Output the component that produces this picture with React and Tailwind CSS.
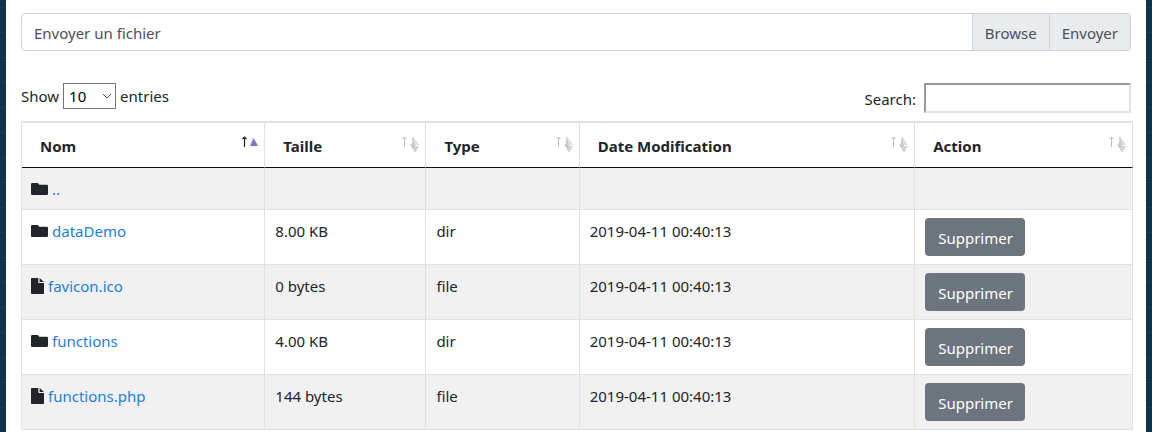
import React, { useState } from "react";

const rows = [
  { name: "..", size: "", type: "", date: "", folder: true, parent: true },
  { name: "dataDemo", size: "8.00 KB", type: "dir", date: "2019-04-11 00:40:13", folder: true },
  { name: "favicon.ico", size: "0 bytes", type: "file", date: "2019-04-11 00:40:13" },
  { name: "functions", size: "4.00 KB", type: "dir", date: "2019-04-11 00:40:13", folder: true },
  { name: "functions.php", size: "144 bytes", type: "file", date: "2019-04-11 00:40:13" },
];

const columns = [
  { label: "Nom", width: "w-[21.9%]", sorted: true },
  { label: "Taille", width: "w-[14.5%]" },
  { label: "Type", width: "w-[13.8%]" },
  { label: "Date Modification", width: "w-[30.2%]" },
  { label: "Action", width: "w-[19.6%]" },
];

function FolderIcon() {
  return (
    <svg className="h-3 w-[17px] shrink-0" viewBox="0 0 17 12" fill="#212529" aria-hidden="true">
      <path d="M1.2 0H6.4Q7.2 0 7.6 .7L8.2 1.7H15.7Q17 1.7 17 3V10.8Q17 12 15.7 12H1.3Q0 12 0 10.8V1.2Q0 0 1.2 0Z" />
    </svg>
  );
}

function FileIcon() {
  return (
    <svg className="h-4 w-[13px] shrink-0" viewBox="0 0 13 16" fill="#212529" aria-hidden="true">
      <path d="M.8 0H7.3V4.2Q7.3 5 8.1 5H13V15.2Q13 16 12.2 16H.8Q0 16 0 15.2V.8Q0 0 .8 0ZM8.6 0L13 4V4.1H8.6Z" />
    </svg>
  );
}

function SortIcon({ sorted }) {
  return sorted ? (
    <svg className="h-5 w-[18px] shrink-0" viewBox="0 0 18 20" aria-hidden="true">
      <path d="M4.5 14V4M2.5 6L4.5 4L6.5 6" fill="none" stroke="#20233f" strokeWidth="1.2" />
      <path d="M12 4V12M10.5 10.5L12 12" fill="none" stroke="#c9cbe2" strokeWidth="1" />
      <path d="M10 13L13.8 5L18 13Z" fill="#7878ce" />
    </svg>
  ) : (
    <svg className="h-5 w-[18px] shrink-0" viewBox="0 0 18 20" aria-hidden="true">
      <path d="M3.5 14V4M1.5 6L3.5 4L5.5 6" fill="none" stroke="#bdbdbd" strokeWidth="1" />
      <path d="M10 12L13 5L18 12Z" fill="#dddddd" />
      <path d="M10 13L14 20L18 13Z" fill="#d3d3d3" />
      <path d="M12 4V14M9.5 11.5L12 14L14 11.5" fill="none" stroke="#b5b5b5" strokeWidth="1" />
    </svg>
  );
}

export default function App() {
  const [query, setQuery] = useState("");
  const visible = rows.filter((row) => row.name.toLowerCase().includes(query.toLowerCase()));

  return (
    <div className="h-screen overflow-hidden bg-[#12324a] bg-[repeating-linear-gradient(to_bottom,transparent_0px,transparent_7px,#1c3d54_7px,#1c3d54_8px,transparent_8px,transparent_25px)] px-1.5 font-['Noto_Sans',sans-serif] text-[15px] leading-6 text-[#212529]">
      <main className="min-h-full bg-white pr-[13px] pl-[15px] pt-[13px]">
        <form className="mr-0.5 flex h-[38px] text-[#495057]" onSubmit={(e) => e.preventDefault()}>
          <label htmlFor="upload" className="flex flex-1 items-center rounded-l border border-[#ced4da] px-3 pt-0.5">
            Envoyer un fichier
          </label>
          <input id="upload" type="file" className="sr-only" />
          <button type="button" onClick={() => document.getElementById("upload").click()} className="border-y border-l border-[#ced4da] bg-[#e9ecef] px-3 pt-0.5 -ml-px">
            Browse
          </button>
          <button type="submit" className="rounded-r border border-[#ced4da] bg-[#e9ecef] px-3 pt-0.5">
            Envoyer
          </button>
        </form>

        <div className="mt-8 mr-0.5 mb-2 flex items-start justify-between">
          <label className="flex items-center gap-1">
            Show
            <span className="grid h-[25px] w-[53px]">
              <select defaultValue="10" className="col-start-1 row-start-1 appearance-none border border-[#767676] bg-white pl-[5px] text-black">
                <option>10</option>
                <option>25</option>
                <option>50</option>
                <option>100</option>
              </select>
              <svg className="pointer-events-none col-start-1 row-start-1 mr-1 h-2 w-2.5 self-center justify-self-end" viewBox="0 0 10 8" fill="none" stroke="#555" aria-hidden="true">
                <path d="M1 2L5 6L9 2" />
              </svg>
            </span>
            entries
          </label>
          <label className="flex items-center gap-2">
            <span className="pt-0.5">Search:</span>
            <input type="search" value={query} onChange={(e) => setQuery(e.target.value)} className="h-[30px] w-[207px] border-2 border-t-[#999] border-r-[#e3e3e3] border-b-[#e3e3e3] border-l-[#999] px-1 outline-none" />
          </label>
        </div>

        <table className="w-full table-fixed border-separate border-spacing-0 border-l border-[#dee2e6]">
          <thead>
            <tr>
              {columns.map((col) => (
                <th key={col.label} aria-sort={col.sorted ? "ascending" : "none"} className={`${col.width} h-[47px] border-t-2 border-r border-b border-t-[#dee2e6] border-r-[#dee2e6] border-b-[#111] p-0 text-left align-top font-bold`}>
                  <button type="button" className="flex w-full items-start justify-between pt-2.5 pr-1.5 pl-[18px] font-bold">
                    <span className="pt-px">{col.label}</span>
                    <SortIcon sorted={col.sorted} />
                  </button>
                </th>
              ))}
            </tr>
          </thead>
          <tbody>
            {visible.map((row) => (
              <tr key={row.name} className="align-top odd:bg-[#f1f1f1] even:bg-white [&>td]:border-r [&>td]:border-b [&>td]:border-[#dee2e6] [&>td]:pt-[9px] [&>td]:pr-2 [&>td]:pb-2 [&>td]:pl-2.5 [&>td:first-child]:pl-[9px] [&>td:last-child]:pt-2">
                <td>
                  <span className="flex items-center gap-1">
                    {row.folder ? <FolderIcon /> : <FileIcon />}
                    <a href="#" className="text-[#1b7fe0]">
                      {row.name}
                    </a>
                  </span>
                </td>
                <td>{row.size}</td>
                <td>{row.type}</td>
                <td>{row.date}</td>
                <td className={row.parent ? "h-[42px]" : "h-[55px]"}>
                  {!row.parent && (
                    <button type="button" className="flex h-[38px] items-center rounded bg-[#6c757d] pr-3 pl-[13px] pt-0.5 text-white">
                      Supprimer
                    </button>
                  )}
                </td>
              </tr>
            ))}
          </tbody>
        </table>
      </main>
    </div>
  );
}
